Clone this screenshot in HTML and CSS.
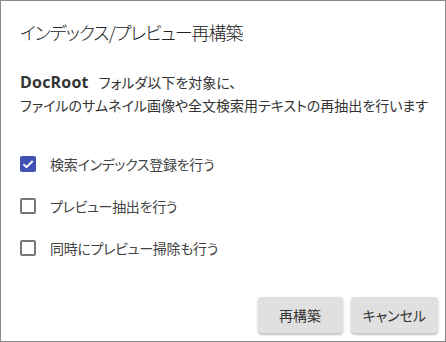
FILE: index.html
```html
<!DOCTYPE html>
<html lang="ja">
<head>
<meta charset="utf-8">
<title>インデックス/プレビュー再構築</title>
<link rel="stylesheet" href="styles.css">
</head>
<body>
<div class="dialog">
  <h1 class="title">インデックス/プレビュー再構築</h1>
  <div class="desc">
    <div><span class="root">DocRoot</span> フォルダ以下を対象に、</div>
    <div>ファイルのサムネイル画像や全文検索用テキストの再抽出を行います</div>
  </div>
  <div class="options">
    <label class="option">
      <span class="box checked"><svg viewBox="0 0 16 16" width="16" height="16"><path d="M3.4 8.1 L6.5 11.2 L12.7 5" fill="none" stroke="#fff" stroke-width="2"/></svg></span>
      <span class="label">検索インデックス登録を行う</span>
    </label>
    <label class="option">
      <span class="box"></span>
      <span class="label">プレビュー抽出を行う</span>
    </label>
    <label class="option">
      <span class="box"></span>
      <span class="label">同時にプレビュー掃除も行う</span>
    </label>
  </div>
  <div class="actions">
    <button class="btn">再構築</button>
    <button class="btn">キャンセル</button>
  </div>
</div>
</body>
</html>
```
FILE: styles.css
```css
html, body {
  margin: 0;
  padding: 0;
  background: #ffffff;
}
body {
  font-family: "Noto Sans CJK JP", "Noto Sans", sans-serif;
  font-feature-settings: "palt";
  color: #333333;
}
.dialog {
  width: 446px;
  height: 342px;
  box-sizing: border-box;
  border: 1px solid #8a8a8a;
  display: flex;
  flex-direction: column;
  padding: 16px 7px 8px 19px;
}
.title {
  margin: 0;
  font-size: 18px;
  line-height: 30px;
  font-weight: 300;
  letter-spacing: -1px;
  color: #222222;
}
.desc {
  margin-top: 24px;
  font-size: 14px;
  line-height: 23px;
  color: #333333;
}
.root {
  font-family: "Open Sans", "Noto Sans", sans-serif;
  font-weight: 700;
  font-size: 16px;
  letter-spacing: 0.2px;
  margin-right: 7px;
}
.options {
  margin-top: 26px;
  display: flex;
  flex-direction: column;
}
.option {
  height: 42px;
  display: flex;
  align-items: center;
  gap: 14px;
  font-size: 14px;
  letter-spacing: -0.3px;
  color: #444444;
}
.box {
  width: 16px;
  height: 16px;
  box-sizing: border-box;
  border: 2px solid #767676;
  border-radius: 2px;
  display: flex;
}
.box.checked {
  border: none;
  background: #3f51b5;
}
.actions {
  margin-top: auto;
  display: flex;
  justify-content: flex-end;
  gap: 8px;
}
.btn {
  height: 36px;
  min-width: 85px;
  padding: 0 12px;
  border: none;
  border-radius: 4px;
  background: #e0e0e0;
  color: #333333;
  font-family: "Noto Sans CJK JP", sans-serif;
  font-feature-settings: "palt";
  font-size: 14px;
  box-shadow: 0 2px 2px rgba(0,0,0,0.18), 0 1px 4px rgba(0,0,0,0.10);
}
```
